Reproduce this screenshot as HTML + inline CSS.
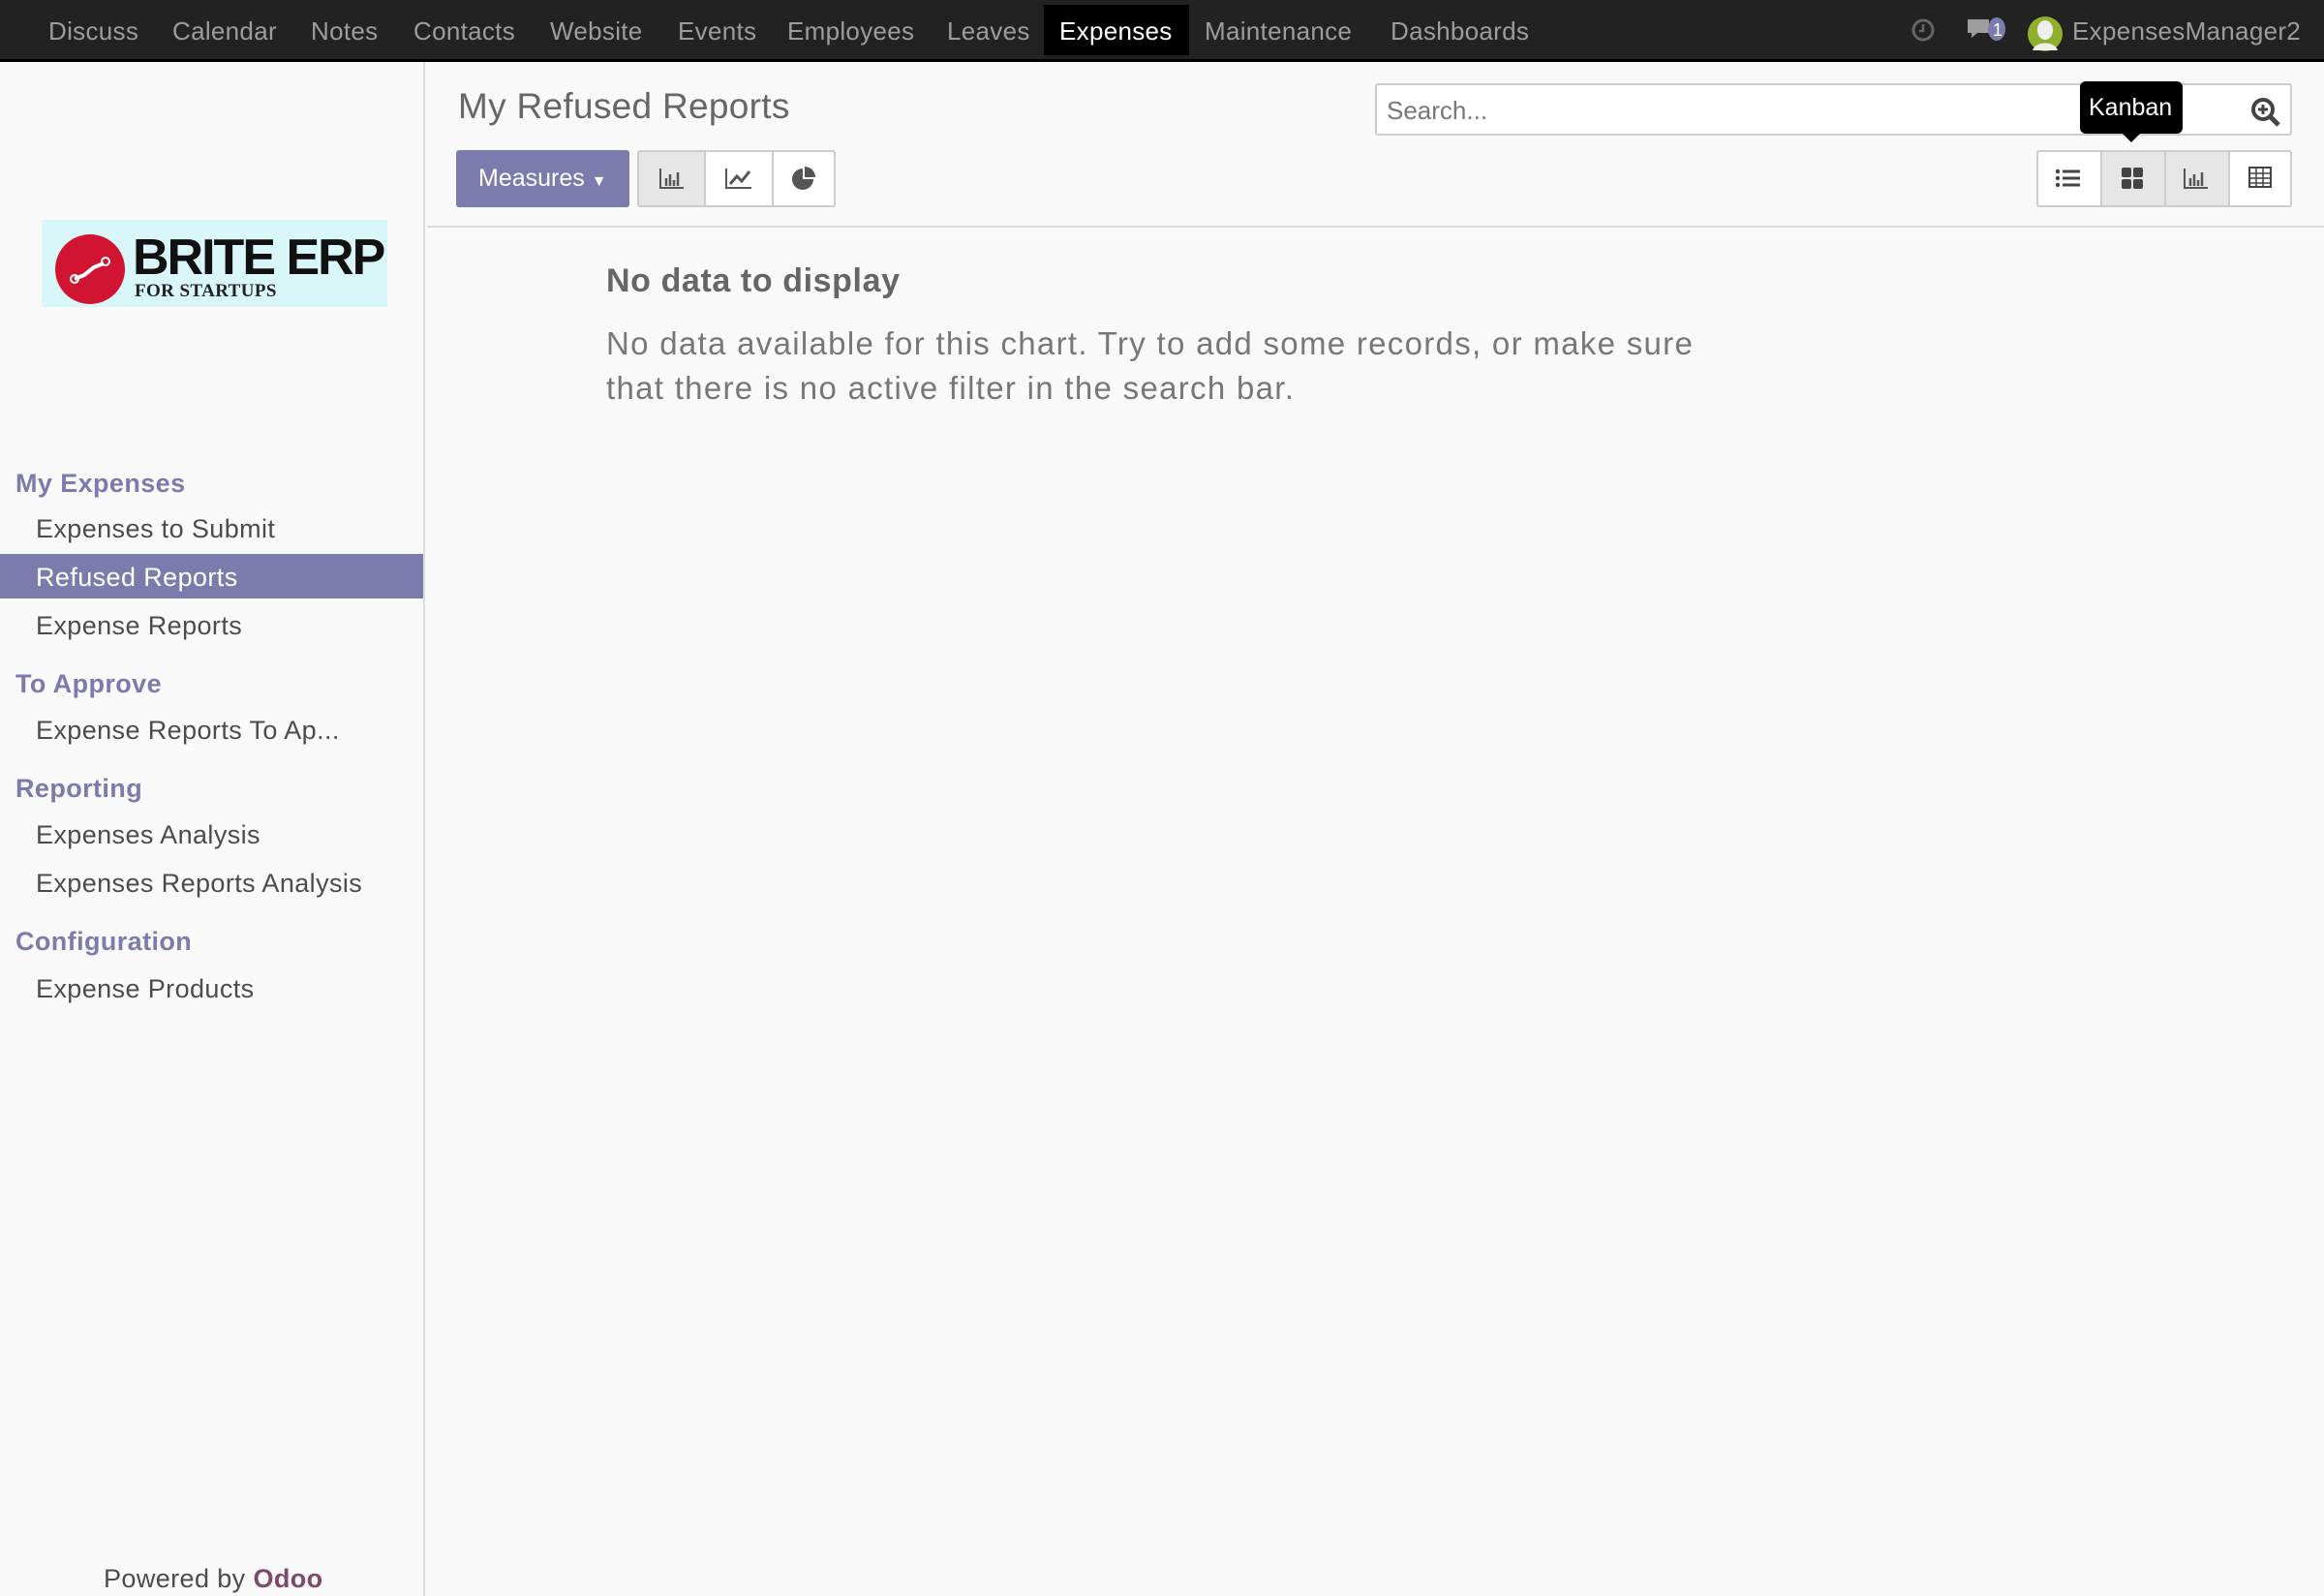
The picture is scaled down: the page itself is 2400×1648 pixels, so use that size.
<!DOCTYPE html>
<html><head><meta charset="utf-8"><style>
*{box-sizing:border-box;margin:0;padding:0}
body{width:2400px;height:1648px;background:#f9f9f9;font-family:"Liberation Sans",sans-serif;position:relative;overflow:hidden;color:#4c4c4c}
.top{position:absolute;left:0;top:0;width:2400px;height:64px;background:#222;border-bottom:3px solid #000}
.top span{position:absolute;top:17px;font-size:26px;color:#9d9d9d;letter-spacing:0.3px}
.exp{position:absolute;left:1078px;top:5px;width:150px;height:52px;background:#000}
.side{position:absolute;left:0;top:64px;width:439px;height:1584px;border-right:2px solid #ddd;background:#f9f9f9}
.side div{position:absolute;font-size:27px;white-space:nowrap;letter-spacing:0.4px}
.h{left:16px;color:#7c7bad;font-weight:bold}
.i{left:37px;color:#4c4c4c}
.sel{position:absolute;left:0;top:508px;width:437px;height:46px;background:#7c7bad}
.btn{position:absolute;border:2px solid #ccc;background:#fff}
</style></head><body>
<div class="top">
<div class="exp"></div>
<span style="left:50px">Discuss</span>
<span style="left:178px">Calendar</span>
<span style="left:321px">Notes</span>
<span style="left:427px">Contacts</span>
<span style="left:568px">Website</span>
<span style="left:700px">Events</span>
<span style="left:813px">Employees</span>
<span style="left:978px">Leaves</span>
<span style="left:1094px;color:#fff">Expenses</span>
<span style="left:1244px">Maintenance</span>
<span style="left:1436px">Dashboards</span>
<svg style="position:absolute;left:1973px;top:18px" width="26" height="26"><circle cx="13" cy="13" r="10" fill="none" stroke="#666" stroke-width="3"/><path d="M13 7v7h-4" stroke="#666" stroke-width="2.5" fill="none"/></svg>
<svg style="position:absolute;left:2030px;top:16px" width="44" height="30"><path d="M2 4h22v14h-12l-6 5v-5h-4z" fill="#9d9d9d"/><ellipse cx="32" cy="14" rx="9" ry="12" fill="#7c7bad"/><text x="28" y="21" font-size="18" fill="#fff" font-family="Liberation Sans">1</text></svg>
<svg style="position:absolute;left:2093px;top:16px" width="38" height="38"><ellipse cx="19" cy="19" rx="18" ry="18" fill="#8fb02a"/><ellipse cx="19" cy="15" rx="8" ry="10" fill="#eee"/><path d="M6 36c3-10 23-10 26 0z" fill="#eee"/></svg>
<span style="left:2140px;color:#9d9d9d">ExpensesManager2</span>
</div>
<div class="side">
<div style="left:43px;top:163px;width:357px;height:90px;background:#d9f7f9"></div>
<svg style="position:absolute;left:55px;top:176px" width="76" height="76"><circle cx="38" cy="38" r="36" fill="#d11432"/><path d="M22 48l10-4 10-8 10-4" stroke="#fff" stroke-width="4" fill="none"/><circle cx="22" cy="48" r="4" fill="none" stroke="#fff" stroke-width="2"/><circle cx="54" cy="30" r="4" fill="none" stroke="#fff" stroke-width="2"/></svg>
<div style="left:137px;top:172px;font-size:52px;font-weight:bold;color:#111;letter-spacing:-2px">BRITE ERP</div>
<div style="left:139px;top:226px;font-size:19px;font-weight:bold;color:#222;font-family:'Liberation Serif',serif">FOR STARTUPS</div>
<div class="sel"></div>
<div class="h" style="top:420px">My Expenses</div>
<div class="i" style="top:467px">Expenses to Submit</div>
<div class="i" style="top:517px;color:#fff">Refused Reports</div>
<div class="i" style="top:567px">Expense Reports</div>
<div class="h" style="top:627px">To Approve</div>
<div class="i" style="top:675px">Expense Reports To Ap...</div>
<div class="h" style="top:735px">Reporting</div>
<div class="i" style="top:783px">Expenses Analysis</div>
<div class="i" style="top:833px">Expenses Reports Analysis</div>
<div class="h" style="top:893px">Configuration</div>
<div class="i" style="top:942px">Expense Products</div>
<div style="left:107px;top:1551px;color:#4c4c4c">Powered by <b style="color:#7c4a6b">Odoo</b></div>
</div>
<div style="position:absolute;left:473px;top:89px;font-size:37px;color:#666;letter-spacing:0.3px">My Refused Reports</div>
<div style="position:absolute;left:471px;top:155px;width:179px;height:59px;background:#7c7bad;border-radius:3px;color:#fff;font-size:25px;padding:15px 0 0 23px">Measures <span style="font-size:16px">▼</span></div>
<div class="btn" style="left:658px;top:155px;width:205px;height:59px;border-radius:3px"></div>
<div style="position:absolute;left:660px;top:157px;width:69px;height:55px;background:#e6e6e6;border-right:2px solid #ccc"></div>
<div style="position:absolute;left:797px;top:157px;width:2px;height:55px;background:#ccc"></div>
<svg style="position:absolute;left:680px;top:172px" width="28" height="24"><path d="M2 2v20h24" stroke="#555" stroke-width="2" fill="none"/><path d="M8 12v8M12 8v12M16 14v6M20 6v14" stroke="#555" stroke-width="2.5"/></svg>
<svg style="position:absolute;left:748px;top:172px" width="30" height="24"><path d="M2 2v20h26" stroke="#555" stroke-width="2" fill="none"/><path d="M6 18l7-8 5 5 8-10" stroke="#555" stroke-width="3" fill="none"/></svg>
<svg style="position:absolute;left:816px;top:170px" width="28" height="28"><path d="M13 4a11 11 0 1 0 11 11h-11z" fill="#555"/><path d="M15 2a11 11 0 0 1 11 11h-11z" fill="#555"/></svg>
<div class="btn" style="left:1420px;top:86px;width:947px;height:54px;border-radius:3px"></div>
<div style="position:absolute;left:1432px;top:99px;font-size:26px;color:#777">Search...</div>
<svg style="position:absolute;left:2324px;top:100px" width="32" height="32"><circle cx="13" cy="13" r="10" fill="none" stroke="#444" stroke-width="4"/><path d="M13 8v10M8 13h10" stroke="#444" stroke-width="3"/><path d="M20 20l9 9" stroke="#444" stroke-width="5"/></svg>
<div style="position:absolute;left:2148px;top:84px;width:106px;height:54px;background:#000;border-radius:6px;color:#fff;font-size:25px;padding:13px 0 0 9px">Kanban</div>
<div style="position:absolute;left:2192px;top:138px;border:9px solid transparent;border-top-color:#000"></div>
<div class="btn" style="left:2103px;top:155px;width:264px;height:59px;border-radius:3px"></div>
<div style="position:absolute;left:2169px;top:157px;width:134px;height:55px;background:#e6e6e6;border-left:2px solid #ccc;border-right:2px solid #ccc"></div>
<div style="position:absolute;left:2235px;top:157px;width:2px;height:55px;background:#ccc"></div>
<svg style="position:absolute;left:2122px;top:172px" width="28" height="24"><path d="M8 5h18M8 12h18M8 19h18" stroke="#444" stroke-width="3"/><circle cx="3" cy="5" r="2.2" fill="#444"/><circle cx="3" cy="12" r="2.2" fill="#444"/><circle cx="3" cy="19" r="2.2" fill="#444"/></svg>
<svg style="position:absolute;left:2190px;top:172px" width="24" height="24"><rect x="1" y="1" width="10" height="10" rx="2" fill="#444"/><rect x="13" y="1" width="10" height="10" rx="2" fill="#444"/><rect x="1" y="13" width="10" height="10" rx="2" fill="#444"/><rect x="13" y="13" width="10" height="10" rx="2" fill="#444"/></svg>
<svg style="position:absolute;left:2254px;top:172px" width="28" height="24"><path d="M2 2v20h24" stroke="#555" stroke-width="2" fill="none"/><path d="M8 12v8M12 8v12M16 14v6M20 6v14" stroke="#555" stroke-width="2.5"/></svg>
<svg style="position:absolute;left:2322px;top:172px" width="24" height="22"><rect x="1" y="1" width="22" height="20" fill="none" stroke="#444" stroke-width="2"/><path d="M1 7h22M1 12h22M1 17h22M8 1v20M15 1v20" stroke="#444" stroke-width="1.5"/></svg>
<div style="position:absolute;left:441px;top:233px;width:1959px;height:2px;background:#ddd"></div>
<div style="position:absolute;left:626px;top:271px;font-size:34px;font-weight:bold;color:#666;letter-spacing:0.6px">No data to display</div>
<div style="position:absolute;left:626px;top:332px;width:1300px;font-size:33px;line-height:46px;color:#777;letter-spacing:1.3px">No data available for this chart. Try to add some records, or make sure<br>that there is no active filter in the search bar.</div>
</body></html>
